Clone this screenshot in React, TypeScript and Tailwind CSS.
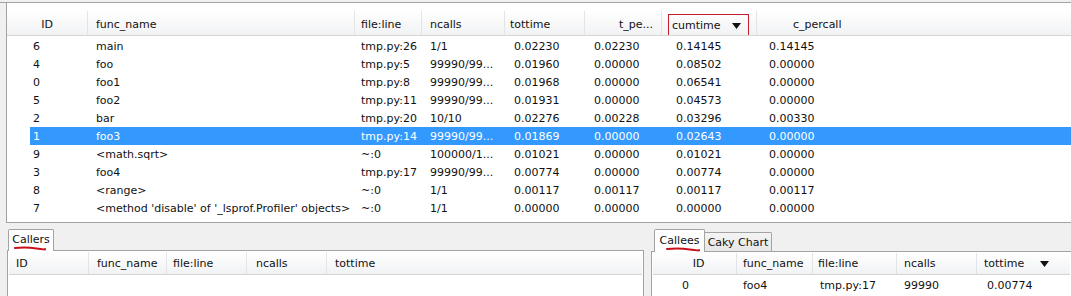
import React from "react";

// column layout of the main profile table (widths in px)
const topCols = [
  { key: "id", w: 81 },
  { key: "func", w: 267 },
  { key: "file", w: 67 },
  { key: "ncalls", w: 83 },
  { key: "tottime", w: 80 },
  { key: "tper", w: 77 },
  { key: "cum", w: 95 },
];

const rows = [
  ["6", "main", "tmp.py:26", "1/1", "0.02230", "0.02230", "0.14145", "0.14145"],
  ["4", "foo", "tmp.py:5", "99990/99...", "0.01960", "0.00000", "0.08502", "0.00000"],
  ["0", "foo1", "tmp.py:8", "99990/99...", "0.01968", "0.00000", "0.06541", "0.00000"],
  ["5", "foo2", "tmp.py:11", "99990/99...", "0.01931", "0.00000", "0.04573", "0.00000"],
  ["2", "bar", "tmp.py:20", "10/10", "0.02276", "0.00228", "0.03296", "0.00330"],
  ["1", "foo3", "tmp.py:14", "99990/99...", "0.01869", "0.00000", "0.02643", "0.00000"],
  ["9", "<math.sqrt>", "~:0", "100000/1...", "0.01021", "0.00000", "0.01021", "0.00000"],
  ["3", "foo4", "tmp.py:17", "99990/99...", "0.00774", "0.00000", "0.00774", "0.00000"],
  ["8", "<range>", "~:0", "1/1", "0.00117", "0.00117", "0.00117", "0.00117"],
  ["7", "<method 'disable' of '_lsprof.Profiler' objects>", "~:0", "1/1", "0.00000", "0.00000", "0.00000", "0.00000"],
];

const SELECTED = 5;

function SortArrow() {
  return (
    <svg width="9" height="6" viewBox="0 0 9 6" className="shrink-0">
      <path d="M0 0 H9 L4.5 6 Z" fill="#111" />
    </svg>
  );
}

function HeaderCell({ w, children, className = "" }: { w?: number; children?: React.ReactNode; className?: string }) {
  return (
    <div
      className={`flex h-full items-center border-r border-[#e3e4e6] whitespace-nowrap ${className}`}
      style={w ? { width: w } : undefined}
    >
      {children}
    </div>
  );
}

function Underline({ width }: { width: number }) {
  // hand-drawn red stroke under the tab labels
  return (
    <svg width={width} height="5" viewBox={`0 0 ${width} 5`} className="block">
      <path
        d={`M1 2 Q ${width * 0.4} 1 ${width * 0.7} 2.5 T ${width - 1} 3`}
        stroke="#c8101a"
        strokeWidth="2"
        fill="none"
        strokeLinecap="round"
      />
    </svg>
  );
}

export default function App() {
  const valPad = ["pl-[3px]", "pl-[8px]", "pl-[6px]", "pl-[8px]", "pl-[9px]", "pl-[9px]", "pl-[14px]", "pl-[12px]"];

  return (
    <div className="w-[1071px] h-[296px] overflow-hidden bg-[#f0f0f0] text-[11px] text-[#111] font-['DejaVu_Sans',sans-serif] leading-none">
      {/* main table */}
      <div className="pt-[2px]">
        <div className="border-t border-[#a3a3a3]">
          <div className="ml-[6px] h-[220px] border-l border-b border-[#a3a3a3] bg-white flex flex-col">
            <div className="h-[8px] shrink-0" />
            <div className="h-[25px] shrink-0 flex border-b border-[#d5d5d5] bg-linear-to-b from-white to-[#f1f2f4]">
              <HeaderCell w={topCols[0].w} className="justify-center pt-[2px]">ID</HeaderCell>
              <HeaderCell w={topCols[1].w} className="pl-[8px] pt-[2px]">func_name</HeaderCell>
              <HeaderCell w={topCols[2].w} className="pl-[6px] pt-[2px]">file:line</HeaderCell>
              <HeaderCell w={topCols[3].w} className="pl-[8px] pt-[2px]">ncalls</HeaderCell>
              <HeaderCell w={topCols[4].w} className="pl-[5px] pt-[2px]">tottime</HeaderCell>
              <HeaderCell w={topCols[5].w} className="justify-end pr-[8px] pt-[2px]">t_pe...</HeaderCell>
              <HeaderCell w={topCols[6].w} className="items-end">
                <div className="ml-[6px] h-[21px] w-[81px] border border-[#c41e2a] border-b-0 flex items-center pl-[3px] pr-[7px] pt-[1px] justify-between">
                  <span>cumtime</span>
                  <SortArrow />
                </div>
              </HeaderCell>
              <div className="flex h-full items-center pl-[36px] pt-[2px]">c_percall</div>
            </div>
            <div className="flex flex-col pt-[1px]">
              {rows.map((r, i) => {
                const sel = i === SELECTED;
                return (
                  <div key={i} className="h-[18px] flex">
                    <div className="w-[23px] shrink-0" />
                    <div className={`flex flex-1 items-center ${sel ? "bg-[#3399ff] text-white" : ""}`}>
                      {r.map((v, j) => (
                        <div
                          key={j}
                          className={`whitespace-nowrap shrink-0 ${valPad[j]}`}
                          style={j < 7 ? { width: j === 0 ? topCols[0].w - 23 : topCols[j].w } : undefined}
                        >
                          {v}
                        </div>
                      ))}
                    </div>
                  </div>
                );
              })}
            </div>
          </div>
        </div>
      </div>

      {/* bottom tab widgets */}
      <div className="flex mt-[6px]">
        {/* callers */}
        <div className="ml-[7px] w-[637px] flex flex-col">
          <div className="flex h-[22px] items-end">
            <div className="relative h-[22px] w-[46px] ml-[1px] border border-b-0 border-[#a3a3a3] bg-white rounded-t-[2px] flex flex-col items-center pt-[4px] z-10">
              <span>Callers</span>
              <div className="mt-[1px] -ml-[2px]">
                <Underline width={32} />
              </div>
            </div>
          </div>
          <div className="-mt-px h-[50px] border border-[#a3a3a3] bg-white p-[1px]">
            <div className="h-[23px] flex border-b border-[#d5d5d5] bg-linear-to-b from-white to-[#f1f2f4]">
              <HeaderCell w={80} className="pl-[7px]">ID</HeaderCell>
              <HeaderCell w={78} className="pl-[8px]">func_name</HeaderCell>
              <HeaderCell w={80} className="pl-[6px]">file:line</HeaderCell>
              <HeaderCell w={80} className="pl-[9px]">ncalls</HeaderCell>
              <div className="flex items-center pl-[8px]">tottime</div>
            </div>
          </div>
        </div>

        {/* callees */}
        <div className="ml-[7px] flex-1 flex flex-col">
          <div className="flex h-[23px] items-end ml-[3px]">
            <div className="relative h-[23px] w-[51px] border border-b-0 border-[#a3a3a3] bg-white rounded-t-[2px] flex flex-col items-center pt-[5px] z-10">
              <span>Callees</span>
              <div className="mt-[1px] ml-[6px]">
                <Underline width={34} />
              </div>
            </div>
            <div className="h-[20px] w-[67px] border border-l-0 border-b-0 border-[#a3a3a3] bg-linear-to-b from-[#f4f4f4] to-[#e6e6e6] rounded-tr-[2px] flex items-center justify-center">
              Caky Chart
            </div>
          </div>
          <div className="-mt-px h-[50px] border border-r-0 border-[#a3a3a3] bg-white p-[1px]">
            <div className="h-[22px] flex border-b border-[#d5d5d5] bg-linear-to-b from-white to-[#f1f2f4]">
              <HeaderCell w={84} className="justify-center pl-[8px]">ID</HeaderCell>
              <HeaderCell w={76} className="pl-[6px]">func_name</HeaderCell>
              <HeaderCell w={84} className="pl-[5px]">file:line</HeaderCell>
              <HeaderCell w={80} className="pl-[7px]">ncalls</HeaderCell>
              <div className="flex items-center pl-[7px] gap-[16px]">
                <span>tottime</span>
                <SortArrow />
              </div>
            </div>
            <div className="h-[20px] flex items-center">
              <div className="w-[84px] pl-[29px]">0</div>
              <div className="w-[76px] pl-[6px]">foo4</div>
              <div className="w-[84px] pl-[7px]">tmp.py:17</div>
              <div className="w-[80px] pl-[7px]">99990</div>
              <div className="pl-[10px]">0.00774</div>
            </div>
          </div>
        </div>
      </div>
    </div>
  );
}
